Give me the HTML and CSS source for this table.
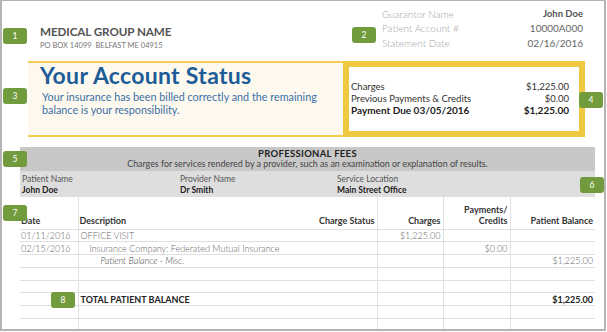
FILE: index.html
```html
<!DOCTYPE html>
<html>
<head>
<meta charset="utf-8">
<link rel="stylesheet" href="styles.css">
</head>
<body>
<div class="page">
  <div class="header">
    <div class="org">
      <div class="org-name">MEDICAL GROUP NAME</div>
      <div class="org-addr">PO BOX 14099 &nbsp;BELFAST ME 04915</div>
    </div>
    <div class="acct">
      <span class="lbl">Guarantor Name</span><span class="val strong">John Doe</span>
      <span class="lbl">Patient Account #</span><span class="val">10000A000</span>
      <span class="lbl">Statement Date</span><span class="val">02/16/2016</span>
    </div>
  </div>

  <div class="status-row">
    <div class="status">
      <div class="status-title">Your Account Status</div>
      <div class="status-text">Your insurance has been billed correctly and the remaining balance is your responsibility.</div>
    </div>
    <div class="summary">
      <div class="sum-line"><span>Charges</span><span>$1,225.00</span></div>
      <div class="sum-line"><span>Previous Payments &amp; Credits</span><span>$0.00</span></div>
      <div class="sum-line due"><span>Payment Due 03/05/2016</span><span>$1,225.00</span></div>
    </div>
  </div>

  <div class="fees">
    <div class="fees-head">
      <div class="fees-title">PROFESSIONAL FEES</div>
      <div class="fees-sub">Charges for services rendered by a provider, such as an examination or explanation of results.</div>
    </div>
    <div class="fees-info">
      <div class="info"><div class="info-lbl">Patient Name</div><div class="info-val">John Doe</div></div>
      <div class="info"><div class="info-lbl">Provider Name</div><div class="info-val">Dr Smith</div></div>
      <div class="info"><div class="info-lbl">Service Location</div><div class="info-val">Main Street Office</div></div>
    </div>
  </div>

  <table class="items">
    <thead>
      <tr>
        <th class="c-date">Date</th>
        <th class="c-desc">Description</th>
        <th class="c-status">Charge Status</th>
        <th class="c-chg">Charges</th>
        <th class="c-pay">Payments/<br>Credits</th>
        <th class="c-bal">Patient Balance</th>
      </tr>
    </thead>
    <tbody>
      <tr><td class="c-date">01/11/2016</td><td class="c-desc">OFFICE VISIT</td><td class="c-status"></td><td class="c-chg">$1,225.00</td><td class="c-pay"></td><td class="c-bal"></td></tr>
      <tr><td class="c-date">02/15/2016</td><td class="c-desc ind1">Insurance Company: Federated Mutual Insurance</td><td class="c-status"></td><td class="c-chg"></td><td class="c-pay">$0.00</td><td class="c-bal"></td></tr>
      <tr><td class="c-date"></td><td class="c-desc ind2">Patient Balance - Misc.</td><td class="c-status"></td><td class="c-chg"></td><td class="c-pay"></td><td class="c-bal">$1,225.00</td></tr>
      <tr><td class="c-date"></td><td class="c-desc"></td><td class="c-status"></td><td class="c-chg"></td><td class="c-pay"></td><td class="c-bal"></td></tr>
      <tr><td class="c-date"></td><td class="c-desc"></td><td class="c-status"></td><td class="c-chg"></td><td class="c-pay"></td><td class="c-bal"></td></tr>
      <tr class="total"><td class="c-date"></td><td class="c-desc">TOTAL PATIENT BALANCE</td><td class="c-status"></td><td class="c-chg"></td><td class="c-pay"></td><td class="c-bal">$1,225.00</td></tr>
      <tr><td class="c-date"></td><td class="c-desc"></td><td class="c-status"></td><td class="c-chg"></td><td class="c-pay"></td><td class="c-bal"></td></tr>
      <tr class="last"><td class="c-date"></td><td class="c-desc"></td><td class="c-status"></td><td class="c-chg"></td><td class="c-pay"></td><td class="c-bal"></td></tr>
    </tbody>
  </table>

  <span class="badge b1">1</span>
  <span class="badge b2">2</span>
  <span class="badge b3">3</span>
  <span class="badge b4">4</span>
  <span class="badge b5">5</span>
  <span class="badge b6">6</span>
  <span class="badge b7">7</span>
  <span class="badge b8">8</span>
</div>
</body>
</html>
```
FILE: styles.css
```css
* { box-sizing: border-box; }
html, body { margin: 0; padding: 0; background: #fff; }
body { font-family: Lato, "Open Sans", sans-serif; color: #444; }

.page {
  position: relative;
  width: 606px;
  height: 331px;
  border: 2px solid #b4b4b4;
  border-top-width: 1px;
  overflow: hidden;
}

/* header */
.header {
  display: flex;
  justify-content: space-between;
  height: 60px;
}
.org { padding: 23px 0 0 38px; }
.org-name {
  font-size: 11.7px;
  line-height: 14px;
  font-weight: 700;
  color: #555;
  letter-spacing: -0.1px;
}
.org-addr {
  margin-top: 3px;
  font-size: 7.5px;
  line-height: 10px;
  color: #777;
}
.acct {
  display: grid;
  grid-template-columns: auto auto;
  justify-content: space-between;
  width: 201px;
  margin: 6px 21px 0 0;
  font-size: 10px;
  line-height: 14.3px;
  align-content: start;
}
.acct .lbl { color: #a6a6a6; font-weight: 300; }
.acct .val { color: #666; text-align: right; }
.acct .val.strong { font-weight: 700; color: #555; font-size: 9.5px; }

/* status */
.status-row {
  display: flex;
  margin-left: 26px;
  height: 76px;
}
.status {
  width: 315px;
  background: #fef9ee;
  border-top: 2px solid #f3cd52;
  border-bottom: 2px solid #f3cd52;
  padding: 0 10px 0 12px;
}
.status-title {
  font-size: 23px;
  letter-spacing: 0.3px;
  line-height: 25.5px;
  font-weight: 700;
  color: #1c5c97;
}
.status-text {
  margin-top: 1.2px;
  font-size: 10.8px;
  line-height: 13px;
  color: #3a6fa7;
  padding-left: 2px;
}
.summary {
  width: 242px;
  border: 6px solid #f0c942;
  background: #fff;
  padding: 0 10px 0 2px;
  display: flex;
  flex-direction: column;
  justify-content: center;
  font-size: 9.5px;
  line-height: 11.7px;
  color: #333;
}
.sum-line { display: flex; justify-content: space-between; }
.sum-line.due { font-weight: 700; font-size: 10px; line-height: 12.5px; color: #222; }

/* professional fees */
.fees { margin: 10px 9px 0 18px; }
.fees-head {
  background: #c8c8c8;
  height: 24px;
  text-align: center;
  padding-top: 2px;
  color: #333;
}
.fees-title { font-size: 9.5px; line-height: 10px; font-weight: 700; color: #222; letter-spacing: 0.3px; }
.fees-sub { font-size: 8.9px; line-height: 10px; color: #444; }
.fees-info {
  background: #dedede;
  height: 26px;
  display: grid;
  grid-template-columns: 158px 157px 1fr;
  padding: 3px 0 0 2px;
  font-size: 8.5px;
  line-height: 10.5px;
}
.info-lbl { color: #555; }
.info-val { color: #222; font-weight: 700; }

/* table */
.items {
  margin-left: 18px;
  width: 575px;
  border-collapse: collapse;
  table-layout: fixed;
  font-size: 9px;
}
.items th {
  height: 32px;
  vertical-align: bottom;
  font-weight: 700;
  color: #333;
  line-height: 11px;
  padding: 0 2px 3px 1px;
  border-bottom: 1px solid #e0e0e0;
}
.items td {
  height: 12.8px;
  padding: 0 2px 0 1px;
  line-height: 11px;
  color: #666;
  font-weight: 300;
  border-bottom: 1px solid #e0e0e0;
  white-space: nowrap;
}
.items .c-date { width: 58px; text-align: left; border-right: 1px solid #e0e0e0; }
.items .c-desc { width: 213px; text-align: left; }
.items .c-status { width: 86px; text-align: right; border-right: 1px solid #e0e0e0; }
.items .c-chg { width: 66px; text-align: right; border-right: 1px solid #e0e0e0; }
.items .c-pay { width: 67px; text-align: right; border-right: 1px solid #e0e0e0; }
.items .c-bal { width: 85px; text-align: right; }
.items td.c-desc { padding-left: 2px; }
.items td.ind1 { padding-left: 11px; }
.items td.ind2 { padding-left: 22px; font-style: italic; color: #444; }
.items tr.total td { font-weight: 700; color: #222; }
.items tr.last td { border-bottom: none; height: 14px; }

/* annotation badges */
.badge {
  position: absolute;
  width: 24px;
  height: 16px;
  border-radius: 3px;
  background: #729b3d;
  color: #fff;
  font-size: 8.5px;
  line-height: 16px;
  text-align: center;
}
.b1 { left: 1px; top: 27px; }
.b2 { left: 350px; top: 26px; }
.b3 { left: 1px; top: 87px; }
.b4 { left: 577px; top: 91px; }
.b5 { left: 1px; top: 150px; }
.b6 { left: 578px; top: 176px; }
.b7 { left: 1px; top: 204px; }
.b8 { left: 49px; top: 291px; }
```
